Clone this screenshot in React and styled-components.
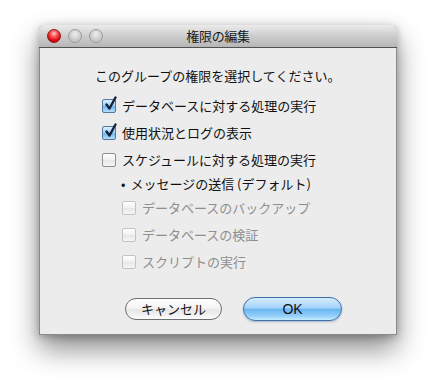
import React from "react";
import styled, { createGlobalStyle, css } from "styled-components";

const Global = createGlobalStyle`
  html, body { margin: 0; padding: 0; background: #ffffff; }
  body { font-family: "Noto Sans CJK JP", "Noto Sans", sans-serif; }
  #root { width: 437px; height: 389px; overflow: hidden; }
`;

const Page = styled.div`
  width: 437px;
  height: 389px;
  padding: 25px 0 0 39px;
  box-sizing: border-box;
`;

const Window = styled.div`
  width: 358px;
  height: 310px;
  box-sizing: border-box;
  background: #ececec;
  border: 1px solid #8a8a8a;
  border-top: none;
  border-radius: 5px 5px 0 0;
  box-shadow: 0 14px 28px rgba(0, 0, 0, 0.45), 0 2px 8px rgba(0, 0, 0, 0.25);
  display: flex;
  flex-direction: column;
`;

const TitleBar = styled.div`
  height: 22px;
  flex: none;
  position: relative;
  display: flex;
  align-items: center;
  justify-content: center;
  background: linear-gradient(#ebebeb, #cdcdcd 50%, #b6b6b6);
  border-bottom: 1px solid #515151;
  border-radius: 5px 5px 0 0;
  margin: 0 -1px;
`;

const Lights = styled.div`
  position: absolute;
  left: 8px;
  top: 4px;
  display: flex;
  gap: 7px;
`;

const Light = styled.span`
  width: 14px;
  height: 14px;
  border-radius: 50%;
  box-sizing: border-box;
  ${(p) =>
    p.$red
      ? css`
          background: radial-gradient(circle at 50% 30%, #ffd0d0 0%, #ff5a5a 30%, #d8000a 70%, #b00008 100%);
          border: 1px solid #8c1a1a;
        `
      : css`
          background: radial-gradient(circle at 50% 35%, #f0f0f0 0%, #d2d2d2 45%, #b6b6b6 100%);
          border: 1px solid #9c9c9c;
        `}
`;

const Title = styled.div`
  font-size: 13px;
  color: #1a1a1a;
  line-height: 22px;
  letter-spacing: -0.3px;
`;

const Body = styled.div`
  flex: 1;
  display: flex;
  flex-direction: column;
  padding: 19px 0 0 0;
`;

const Intro = styled.div`
  font-size: 13px;
  line-height: 18px;
  color: #111;
  padding-left: 55px;
  margin-bottom: 7px;
`;

const List = styled.div`
  display: flex;
  flex-direction: column;
  padding-left: 62px;
`;

const Row = styled.div`
  height: ${(p) => (p.$short ? 21 : 27)}px;
  display: flex;
  align-items: center;
  padding-left: ${(p) => p.$indent || 0}px;
  font-size: 13px;
  color: ${(p) => (p.$disabled ? "#8e8e8e" : "#111")};
`;

const Box = styled.span`
  width: 14px;
  height: 14px;
  box-sizing: border-box;
  border-radius: 2px;
  margin-right: 6px;
  position: relative;
  flex: none;
  ${(p) =>
    p.$checked
      ? css`
          background: linear-gradient(#dcefff, #9fd0f6 50%, #6db4ee 51%, #b4def9);
          border: 1px solid #5478a0;
        `
      : css`
          background: linear-gradient(#ffffff, #f1f1f1 50%, #e6e6e6 51%, #f6f6f6);
          border: 1px solid ${p.$disabled ? "#c3c3c3" : "#8e8e8e"};
        `}
`;

const Check = styled.svg`
  position: absolute;
  left: 1px;
  top: -4px;
  width: 14px;
  height: 15px;
`;

const Bullet = styled.span`
  margin-right: 5px;
  font-size: 13px;
`;

const Buttons = styled.div`
  margin-top: auto;
  display: flex;
  justify-content: center;
  gap: 21px;
  padding: 0 0 13px 31px;
`;

const Button = styled.button`
  height: 22px;
  box-sizing: border-box;
  border-radius: 11px;
  font-family: "Noto Sans CJK JP", "Noto Sans", sans-serif;
  font-size: 13px;
  line-height: 20px;
  padding: 0;
  color: #111;
  ${(p) =>
    p.$primary
      ? css`
          width: 99px;
          height: 24px;
          border-radius: 12px;
          background: linear-gradient(#d6ecfd 0%, #a3d3fa 45%, #6bb6f1 52%, #90cdf9 80%, #c6ebff 100%);
          border: 1px solid #3f6fa8;
          box-shadow: 0 1px 2px rgba(30, 80, 140, 0.35);
          font-family: "Liberation Sans", Arial, sans-serif;
          font-size: 14px;
        `
      : css`
          width: 97px;
          background: linear-gradient(#ffffff 0%, #f4f4f4 45%, #e6e6e6 55%, #fbfbfb 100%);
          border: 1px solid #6e6e6e;
          margin-top: 1px;
        `}
`;

function CheckBox({ checked, disabled }) {
  return (
    <Box $checked={checked} $disabled={disabled}>
      {checked && (
        <Check viewBox="0 0 14 15">
          <path d="M2.5 8.5 L5.5 12.5 L11.5 1.5" fill="none" stroke="#12223a" strokeWidth="2.4" strokeLinecap="round" strokeLinejoin="round" />
        </Check>
      )}
    </Box>
  );
}

export default function App() {
  return (
    <>
      <Global />
      <Page>
        <Window>
          <TitleBar>
            <Lights>
              <Light $red />
              <Light />
              <Light />
            </Lights>
            <Title>権限の編集</Title>
          </TitleBar>
          <Body>
            <Intro>このグループの権限を選択してください。</Intro>
            <List>
              <Row>
                <CheckBox checked />
                データベースに対する処理の実行
              </Row>
              <Row>
                <CheckBox checked />
                使用状況とログの表示
              </Row>
              <Row>
                <CheckBox />
                スケジュールに対する処理の実行
              </Row>
              <Row $short $indent={19}>
                <Bullet>•</Bullet>
                メッセージの送信 (デフォルト)
              </Row>
              <Row $indent={20} $disabled>
                <CheckBox disabled />
                データベースのバックアップ
              </Row>
              <Row $indent={20} $disabled>
                <CheckBox disabled />
                データベースの検証
              </Row>
              <Row $indent={20} $disabled>
                <CheckBox disabled />
                スクリプトの実行
              </Row>
            </List>
            <Buttons>
              <Button>キャンセル</Button>
              <Button $primary>OK</Button>
            </Buttons>
          </Body>
        </Window>
      </Page>
    </>
  );
}
